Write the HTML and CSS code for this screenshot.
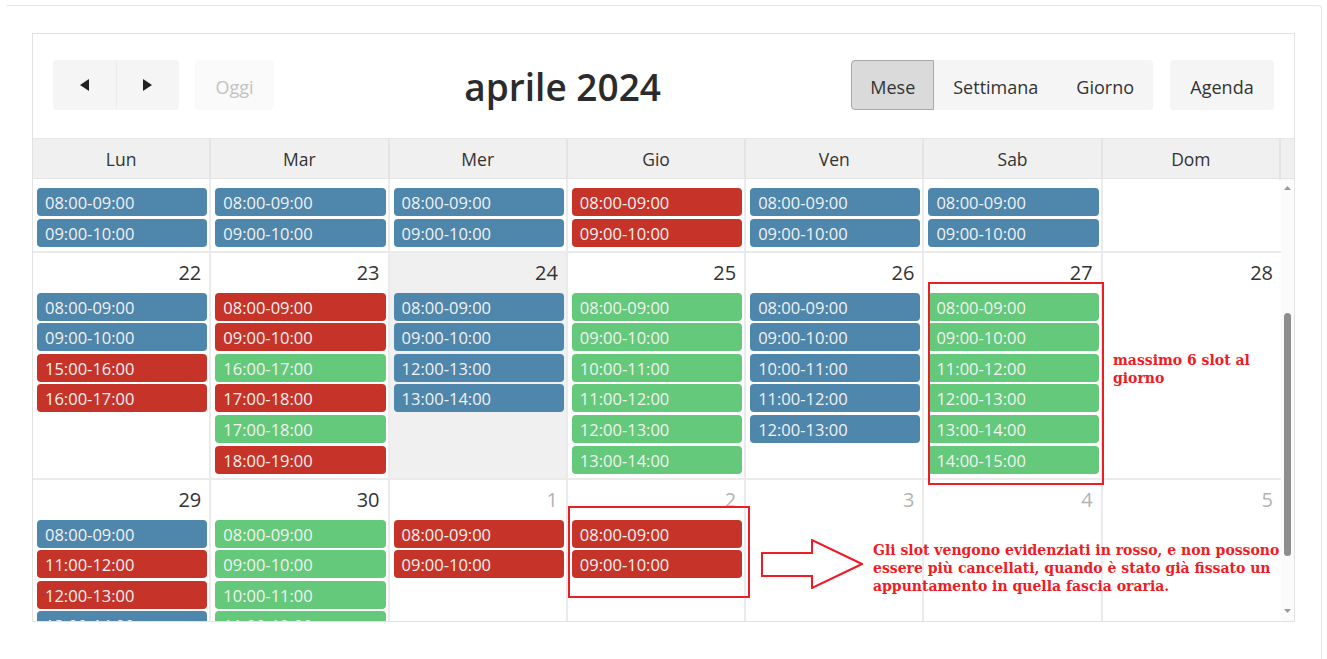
FILE: index.html
```html
<!DOCTYPE html>
<html lang="it">
<head>
<meta charset="utf-8">
<title>Calendario slot</title>
<link rel="stylesheet" href="styles.css">
</head>
<body>
<div class="card">
  <div class="calendar">
    <div class="toolbar">
      <div class="tb-side">
        <div class="btn-group">
          <button class="btn btn-icon" aria-label="Precedente">
            <svg width="9" height="12" viewBox="0 0 9 12"><polygon points="9,0 9,12 0,6" fill="#222"/></svg>
          </button>
          <button class="btn btn-icon" aria-label="Successivo">
            <svg width="9" height="12" viewBox="0 0 9 12"><polygon points="0,0 0,12 9,6" fill="#222"/></svg>
          </button>
        </div>
        <button class="btn btn-disabled">Oggi</button>
      </div>
      <h2 class="title">aprile 2024</h2>
      <div class="tb-side">
        <div class="btn-group">
          <button class="btn btn-active">Mese</button>
          <button class="btn">Settimana</button>
          <button class="btn">Giorno</button>
        </div>
        <button class="btn btn-agenda">Agenda</button>
      </div>
    </div>

    <div class="head">
      <div class="head-cell">Lun</div>
      <div class="head-cell">Mar</div>
      <div class="head-cell">Mer</div>
      <div class="head-cell">Gio</div>
      <div class="head-cell">Ven</div>
      <div class="head-cell">Sab</div>
      <div class="head-cell">Dom</div>
      <div class="head-gutter"></div>
    </div>

    <div class="body">
      <div class="viewport">
        <div class="weeks">
          <!-- 15 - 21 aprile -->
          <div class="week">
            <div class="day"><div class="num">15</div><div class="evs">
              <div class="ev blue">08:00-09:00</div><div class="ev blue">09:00-10:00</div></div></div>
            <div class="day"><div class="num">16</div><div class="evs">
              <div class="ev blue">08:00-09:00</div><div class="ev blue">09:00-10:00</div></div></div>
            <div class="day"><div class="num">17</div><div class="evs">
              <div class="ev blue">08:00-09:00</div><div class="ev blue">09:00-10:00</div></div></div>
            <div class="day"><div class="num">18</div><div class="evs">
              <div class="ev red">08:00-09:00</div><div class="ev red">09:00-10:00</div></div></div>
            <div class="day"><div class="num">19</div><div class="evs">
              <div class="ev blue">08:00-09:00</div><div class="ev blue">09:00-10:00</div></div></div>
            <div class="day"><div class="num">20</div><div class="evs">
              <div class="ev blue">08:00-09:00</div><div class="ev blue">09:00-10:00</div></div></div>
            <div class="day"><div class="num">21</div><div class="evs"></div></div>
          </div>

          <!-- 22 - 28 aprile -->
          <div class="week">
            <div class="day"><div class="num">22</div><div class="evs">
              <div class="ev blue">08:00-09:00</div>
              <div class="ev blue">09:00-10:00</div>
              <div class="ev red">15:00-16:00</div>
              <div class="ev red">16:00-17:00</div></div></div>
            <div class="day"><div class="num">23</div><div class="evs">
              <div class="ev red">08:00-09:00</div>
              <div class="ev red">09:00-10:00</div>
              <div class="ev green">16:00-17:00</div>
              <div class="ev red">17:00-18:00</div>
              <div class="ev green">17:00-18:00</div>
              <div class="ev red">18:00-19:00</div></div></div>
            <div class="day today"><div class="num">24</div><div class="evs">
              <div class="ev blue">08:00-09:00</div>
              <div class="ev blue">09:00-10:00</div>
              <div class="ev blue">12:00-13:00</div>
              <div class="ev blue">13:00-14:00</div></div></div>
            <div class="day"><div class="num">25</div><div class="evs">
              <div class="ev green">08:00-09:00</div>
              <div class="ev green">09:00-10:00</div>
              <div class="ev green">10:00-11:00</div>
              <div class="ev green">11:00-12:00</div>
              <div class="ev green">12:00-13:00</div>
              <div class="ev green">13:00-14:00</div></div></div>
            <div class="day"><div class="num">26</div><div class="evs">
              <div class="ev blue">08:00-09:00</div>
              <div class="ev blue">09:00-10:00</div>
              <div class="ev blue">10:00-11:00</div>
              <div class="ev blue">11:00-12:00</div>
              <div class="ev blue">12:00-13:00</div></div></div>
            <div class="day"><div class="num">27</div><div class="evs">
              <div class="ev green">08:00-09:00</div>
              <div class="ev green">09:00-10:00</div>
              <div class="ev green">11:00-12:00</div>
              <div class="ev green">12:00-13:00</div>
              <div class="ev green">13:00-14:00</div>
              <div class="ev green">14:00-15:00</div></div></div>
            <div class="day"><div class="num">28</div><div class="evs"></div></div>
          </div>

          <!-- 29 aprile - 5 maggio -->
          <div class="week">
            <div class="day"><div class="num">29</div><div class="evs">
              <div class="ev blue">08:00-09:00</div>
              <div class="ev red">11:00-12:00</div>
              <div class="ev red">12:00-13:00</div>
              <div class="ev blue">13:00-14:00</div></div></div>
            <div class="day"><div class="num">30</div><div class="evs">
              <div class="ev green">08:00-09:00</div>
              <div class="ev green">09:00-10:00</div>
              <div class="ev green">10:00-11:00</div>
              <div class="ev green">11:00-12:00</div></div></div>
            <div class="day"><div class="num other">1</div><div class="evs">
              <div class="ev red">08:00-09:00</div>
              <div class="ev red">09:00-10:00</div></div></div>
            <div class="day"><div class="num other">2</div><div class="evs">
              <div class="ev red">08:00-09:00</div>
              <div class="ev red">09:00-10:00</div></div></div>
            <div class="day"><div class="num other">3</div><div class="evs"></div></div>
            <div class="day"><div class="num other">4</div><div class="evs"></div></div>
            <div class="day"><div class="num other">5</div><div class="evs"></div></div>
          </div>
        </div>
      </div>
      <div class="scrollbar">
        <svg class="sb-arrow sb-up" width="7" height="4" viewBox="0 0 7 4"><polygon points="0,4 7,4 3.5,0" fill="#9a9a9a"/></svg>
        <div class="sb-thumb"></div>
        <svg class="sb-arrow sb-down" width="7" height="4" viewBox="0 0 7 4"><polygon points="0,0 7,0 3.5,4" fill="#9a9a9a"/></svg>
      </div>
    </div>

    <!-- note sovrapposte al calendario -->
    <div class="mark-box box-sat"></div>
    <div class="mark-box box-thu"></div>
    <svg class="mark-arrow" width="102" height="50" viewBox="0 0 102 50">
      <polygon points="1,14 51,14 51,1 101,25 51,49 51,37 1,37" fill="#fff" stroke="#ee1c25" stroke-width="2"/>
    </svg>
    <p class="note note-max">massimo 6 slot al<br>giorno</p>
    <p class="note note-red">Gli slot vengono evidenziati in rosso, e non possono<br>essere più cancellati, quando è stato già fissato un<br>appuntamento in quella fascia oraria.</p>
  </div>
</div>
</body>
</html>
```

FILE: styles.css
```css
* {
  box-sizing: border-box;
  margin: 0;
  padding: 0;
}

html, body {
  background: #fff;
  overflow: hidden;
}

body {
  font-family: "Open Sans", "Noto Sans", sans-serif;
  color: #333;
}

/* outer panel */
.card {
  margin: 5px 0 0 7px;
  width: 1315px;
  height: 660px;
  border-top: 1px solid #e6e6e6;
  border-right: 1px solid #e6e6e6;
  border-top-right-radius: 4px;
  padding: 27px 0 0 25px;
}

.calendar {
  position: relative;
  width: 1263px;
  border: 1px solid #e2e2e2;
  background: #fff;
}

/* toolbar */
.toolbar {
  display: flex;
  align-items: center;
  justify-content: space-between;
  height: 104px;
  padding: 0 20px 2px;
}

.tb-side {
  display: flex;
  gap: 16px;
}

.tb-side + .title + .tb-side {
  gap: 17px;
}

.btn-group {
  display: flex;
}

.btn {
  height: 50px;
  padding: 3px 18px 0;
  border: 1px solid transparent;
  border-radius: 4px;
  background: #f5f5f5;
  color: #333;
  font-family: "Open Sans", "Noto Sans", sans-serif;
  font-size: 18px;
  line-height: 44px;
  display: flex;
  align-items: center;
  justify-content: center;
}

.btn-group .btn:not(:first-child) {
  border-top-left-radius: 0;
  border-bottom-left-radius: 0;
}

.btn-group .btn:not(:last-child) {
  border-top-right-radius: 0;
  border-bottom-right-radius: 0;
}

.btn-icon {
  width: 63px;
  padding: 0;
}

.btn-icon + .btn-icon {
  border-left-color: #ececec;
}

.btn-disabled {
  width: 79px;
  padding: 3px 0 0;
  background: #fafafa;
  color: #c2c2c2;
}

.btn-active {
  width: 83px;
  padding: 3px 0 0;
  background: #dadada;
  border-color: #a8a8a8;
  border-radius: 4px;
}

.btn-agenda {
  width: 104px;
  padding: 3px 0 0;
}

.title {
  height: 50px;
  font-size: 37px;
  font-weight: 600;
  line-height: 54px;
  color: #2b2b2b;
}

/* weekday header */
.head {
  display: grid;
  grid-template-columns: repeat(7, 1fr) 13px;
  height: 41px;
  background: #f0f0f0;
  border-top: 1px solid #e8e8e8;
  border-bottom: 1px solid #e4e4e4;
}

.head-cell {
  border-right: 2px solid #e4e4e4;
  text-align: center;
  font-size: 17.5px;
  line-height: 41px;
  color: #333;
}

/* scrolling month body */
.body {
  display: flex;
  height: 442px;
}

.viewport {
  flex: 1;
  overflow: hidden;
}

.weeks {
  margin-top: -31px;
}

.week {
  display: grid;
  grid-template-columns: repeat(7, 1fr);
  border-bottom: 2px solid #ebebeb;
}

.day {
  border-right: 2px solid #ebebeb;
}

.day:last-child {
  border-right: none;
}

.day.today {
  background: #f0f0f0;
}

.num {
  height: 40px;
  padding: 6px 8px 0 0;
  text-align: right;
  font-size: 20px;
  line-height: 27px;
  color: #333;
}

.num.other {
  color: #b3b3b3;
}

.evs {
  display: flex;
  flex-direction: column;
  gap: 2.6px;
  padding: 0 2px 4px 4px;
}

.ev {
  height: 28px;
  padding-left: 8px;
  border-radius: 4px;
  font-size: 16.5px;
  line-height: 30px;
  color: #f2f2f2;
  white-space: nowrap;
  overflow: hidden;
}

.ev.blue { background: #4f86ab; }
.ev.red { background: #c63429; }
.ev.green { background: #64c97a; }

/* scrollbar gutter */
.scrollbar {
  width: 13px;
  display: flex;
  flex-direction: column;
  align-items: center;
  background: #fbfbfb;
}

.sb-up {
  margin-top: 7px;
}

.sb-thumb {
  width: 7px;
  height: 243px;
  margin-top: 123px;
  border-radius: 4px;
  background: #8e8e8e;
}

.sb-down {
  margin-top: 53px;
}

/* overlaid annotations */
.mark-box {
  position: absolute;
  border: 2px solid #ee1c25;
}

.box-sat {
  left: 895px;
  top: 248px;
  width: 176px;
  height: 203px;
}

.box-thu {
  left: 535px;
  top: 472px;
  width: 182px;
  height: 92px;
}

.mark-arrow {
  position: absolute;
  left: 728px;
  top: 505px;
}

.note {
  position: absolute;
  font-family: "DejaVu Serif", "Liberation Serif", serif;
  font-weight: bold;
  font-size: 14px;
  color: #ee1c25;
  white-space: nowrap;
}

.note-max {
  left: 1080px;
  top: 317px;
  line-height: 18px;
}

.note-red {
  left: 840px;
  top: 507px;
  line-height: 18px;
}
```
